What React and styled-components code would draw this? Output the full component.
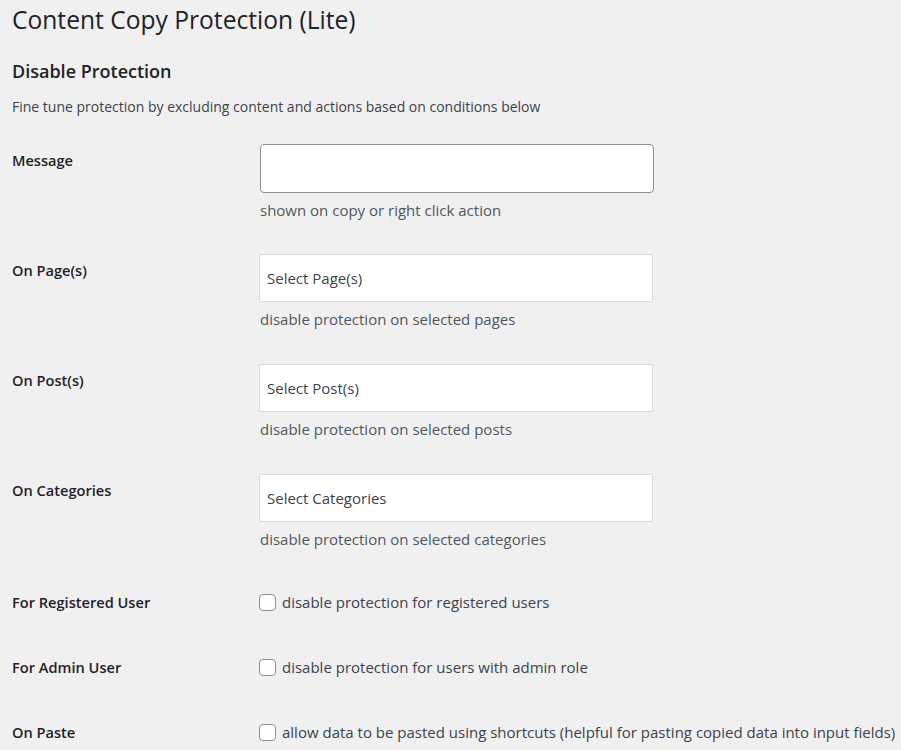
import React from 'react'
import styled, { createGlobalStyle } from 'styled-components'

const GlobalStyle = createGlobalStyle`
  html, body {
    margin: 0;
    padding: 0;
    background: #f0f0f1;
  }
  body {
    font-family: "Open Sans", "Noto Sans", sans-serif;
    color: #1d2327;
    font-size: 14px;
  }
`

const Page = styled.div`
  padding: 0 12px;
  width: 901px;
  box-sizing: border-box;
  overflow: hidden;
`
const Title = styled.h1`
  margin: 0;
  padding: 4px 0 0;
  font-size: 24.6px;
  font-weight: 400;
  line-height: 32px;
  color: #1d2327;
`
const SectionTitle = styled.h2`
  margin: 22px 0 0;
  font-size: 18px;
  font-weight: 600;
  line-height: 26px;
`
const Intro = styled.p`
  margin: 13px 0 0;
  font-size: 14px;
  line-height: 20px;
  color: #3c434a;
`
const Form = styled.div`
  display: grid;
  grid-template-columns: 248px 1fr;
  margin-top: 27px;
`
const Label = styled.div`
  font-size: 14.6px;
  font-weight: 600;
  line-height: 20px;
  padding-top: ${p => p.$top}px;
  height: ${p => p.$h}px;
  box-sizing: border-box;
`
const Field = styled.div`
  display: flex;
  flex-direction: column;
  height: ${p => p.$h}px;
  padding-top: ${p => p.$top}px;
  box-sizing: border-box;
`
const TextBox = styled.div`
  width: 394px;
  height: 49px;
  box-sizing: border-box;
  background: #fff;
  border: 1px solid #8c8f94;
  border-radius: 4px;
`
const SelectBox = styled.div`
  display: flex;
  align-items: center;
  width: 394px;
  height: 48px;
  margin-left: -1px;
  box-sizing: border-box;
  padding-left: 7px;
  background: #fff;
  border: 1px solid #dcdcde;
  font-size: 15px;
  color: #3c434a;
`
const Help = styled.div`
  margin-top: 7px;
  font-size: 15px;
  line-height: 20px;
  color: #50575e;
`
const CheckRow = styled.label`
  display: flex;
  align-items: center;
  gap: 6px;
  margin-left: -1px;
  font-size: 15px;
  line-height: 20px;
  color: #3c434a;
  white-space: nowrap;
`
const Box = styled.span`
  flex: none;
  width: 17px;
  height: 17px;
  box-sizing: border-box;
  border: 1px solid #8c8f94;
  border-radius: 4px;
  background: #fff;
`

const selects = [
  { label: 'On Page(s)', placeholder: 'Select Page(s)', help: 'disable protection on selected pages' },
  { label: 'On Post(s)', placeholder: 'Select Post(s)', help: 'disable protection on selected posts' },
  { label: 'On Categories', placeholder: 'Select Categories', help: 'disable protection on selected categories' },
]

const checks = [
  { label: 'For Registered User', text: 'disable protection for registered users' },
  { label: 'For Admin User', text: 'disable protection for users with admin role' },
  { label: 'On Paste', text: 'allow data to be pasted using shortcuts (helpful for pasting copied data into input fields)' },
]

export default function App() {
  return (
    <Page>
      <GlobalStyle />
      <Title>Content Copy Protection (Lite)</Title>
      <SectionTitle>Disable Protection</SectionTitle>
      <Intro>Fine tune protection by excluding content and actions based on conditions below</Intro>
      <Form>
        <Label $top={6} $h={110}>Message</Label>
        <Field $top={0} $h={110}>
          <TextBox />
          <Help>shown on copy or right click action</Help>
        </Field>
        {selects.map(s => (
          <React.Fragment key={s.label}>
            <Label $top={6} $h={110}>{s.label}</Label>
            <Field $top={0} $h={110}>
              <SelectBox>{s.placeholder}</SelectBox>
              <Help>{s.help}</Help>
            </Field>
          </React.Fragment>
        ))}
        {checks.map(c => (
          <React.Fragment key={c.label}>
            <Label $top={8} $h={65}>{c.label}</Label>
            <Field $top={8} $h={65}>
              <CheckRow><Box />{c.text}</CheckRow>
            </Field>
          </React.Fragment>
        ))}
      </Form>
    </Page>
  )
}
